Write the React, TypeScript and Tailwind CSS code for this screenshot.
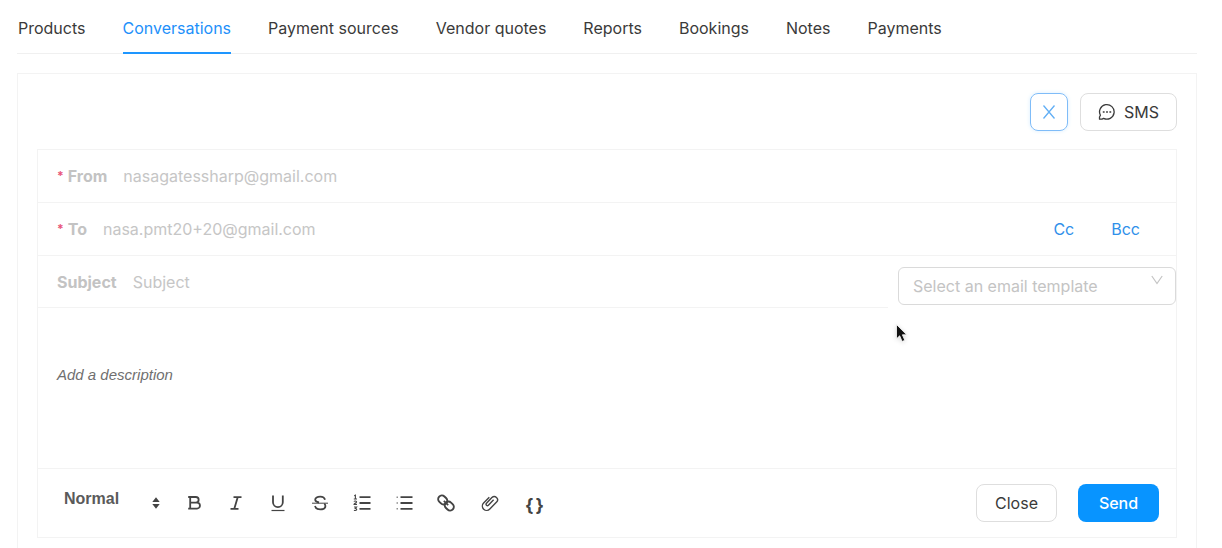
import type { ReactNode } from "react";

const tabs = [
  "Products",
  "Conversations",
  "Payment sources",
  "Vendor quotes",
  "Reports",
  "Bookings",
  "Notes",
  "Payments",
];

const Icon = ({ children, className = "size-[18px]" }: { children: ReactNode; className?: string }) => (
  <svg
    viewBox="0 0 18 18"
    className={className}
    fill="none"
    stroke="currentColor"
    strokeWidth="1.8"
    aria-hidden="true"
  >
    {children}
  </svg>
);

const tools: { label: string; icon: ReactNode }[] = [
  {
    label: "Bold",
    icon: (
      <Icon>
        <path d="M3.2 3h7.600a2.800 2.800 0 0 1 0 5.700H5M5 8.700h7a2.900 2.900 0 0 1 0 5.900H3.200M5.200 3v11.600" />
      </Icon>
    ),
  },
  {
    label: "Italic",
    icon: (
      <Icon>
        <path d="M6.500 3.200h8M3.500 14.800h8M10.700 3.200 7.300 14.800" />
      </Icon>
    ),
  },
  {
    label: "Underline",
    icon: (
      <Icon>
        <path d="M4 1.500v6.700a4.900 4.900 0 0 0 9.800 0V1.500" />
        <path d="M2.500 16.500h13" strokeWidth="1.200" />
      </Icon>
    ),
  },
  {
    label: "Strikethrough",
    icon: (
      <Icon>
        <path d="M14 5.800C13.500 3.600 11.500 2.600 9.200 2.600c-2.900 0-5 1.200-5 3.200C4.200 7.300 5.600 8 8 8.500M4 12c.6 2.400 2.600 3.400 5.200 3.400 3 0 5.200-1.200 5.200-3.400 0-1-.4-1.700-1.200-2.200" />
        <path d="M1 9.200h16" strokeWidth="1" />
      </Icon>
    ),
  },
  {
    label: "Ordered list",
    icon: (
      <Icon>
        <path d="M6.500 3.200H17.500M6.500 9H17.500M6.500 14.800H17.500" />
        <path
          d="M1.200 1.800l1.200-.6v3.600M.8 5h3.200M1 7.600c.4-.9 2.600-.8 2.600.3 0 .9-2.600 1.400-2.600 2.500h3M1 13h2.600l-1.300 1.500c2.200 0 1.800 2.600-1.400 1.800"
          strokeWidth="1.100"
        />
      </Icon>
    ),
  },
  {
    label: "Bullet list",
    icon: (
      <Icon>
        <path d="M5.500 3.200H17.500M5.500 9H17.500M5.500 14.800H17.500" />
        <path d="M1.500 3.200H3M1.500 9H3M1.500 14.800H3" strokeWidth="1.500" opacity="0.6" />
      </Icon>
    ),
  },
  {
    label: "Insert link",
    icon: (
      <Icon>
        <g transform="rotate(43 9 9)" strokeWidth="2">
          <rect x="-0.300" y="5.300" width="9.600" height="7.400" rx="3.700" />
          <rect x="8.700" y="5.300" width="9.600" height="7.400" rx="3.700" />
          <path d="M6 9h6" strokeWidth="1.700" />
        </g>
      </Icon>
    ),
  },
  {
    label: "Attach file",
    icon: (
      <Icon className="ml-0.5 size-[18px]">
        <path
          d="M12.600 5.800 7.400 11.200a1.300 1.300 0 0 1-1.900-1.900l5.400-5.700a3.200 3.200 0 0 1 4.700 4.500l-6.800 7a4.300 4.300 0 0 1-6.200-6l5.700-5.900"
          strokeWidth="1.400"
        />
      </Icon>
    ),
  },
];

function Field({
  id,
  label,
  value,
  children,
}: {
  id: string;
  label: string;
  value: string;
  children?: ReactNode;
}) {
  return (
    <div className="flex h-[53px] items-center border-b border-[#f3f3f3] pl-[19px] pr-9">
      <label htmlFor={id} className="flex gap-1 font-bold text-[#c3c3c3]">
        <span className="text-xs leading-6 text-[#e8557a]">*</span>
        {label}
      </label>
      <input
        id={id}
        type="email"
        defaultValue={value}
        className="ml-4 min-w-0 flex-1 bg-transparent text-[#c6c6c6] outline-none"
      />
      {children}
    </div>
  );
}

export default function App() {
  return (
    <div className="relative min-h-screen bg-white pl-[17px] pr-[25px] font-['Inter',sans-serif] text-base text-[#3a3a3a]">
      <nav className="flex gap-[37px] border-b border-[#f0f0f0] pl-px">
        {tabs.map((tab) => (
          <a
            key={tab}
            href={`#${tab.toLowerCase().replace(" ", "-")}`}
            aria-current={tab === "Conversations" ? "page" : undefined}
            className={
              tab === "Conversations"
                ? "-mb-px border-b-2 border-[#1e96ff] pt-4 pb-3 text-[#1e90fa]"
                : "pt-4 pb-3"
            }
          >
            {tab}
          </a>
        ))}
      </nav>

      <main className="mt-[19px] min-h-[475px] border border-b-0 border-[#f3f3f3] px-[19px] pt-[19px]">
        <div className="flex justify-end gap-3">
          <button
            type="button"
            aria-label="Close conversation"
            className="flex size-[38px] items-center justify-center rounded-lg border border-[#7fbcf8] text-[#62aff5] shadow-[0_0_4px_#d9eeff]"
          >
            <svg viewBox="0 0 14 16" className="h-4 w-3.5" fill="none" stroke="currentColor" strokeWidth="1.300">
              <path d="M1.500 1.500 12.500 14.500M12.500 1.500 1.500 14.500" />
            </svg>
          </button>
          <button
            type="button"
            className="flex h-[38px] items-center gap-2 rounded-lg border border-[#dedede] px-[17px]"
          >
            <svg viewBox="0 0 18 18" className="size-[18px]" fill="none" stroke="currentColor" strokeWidth="1.300">
              <path d="M1.500 16.200V14L2.400 12.300A7.300 7.300 0 1 1 5.600 15.400L4 16.200Z" strokeLinejoin="round" />
              <path d="M4.800 9h1.800M8.100 9h1.800M11.400 9h1.800" strokeWidth="1.500" />
            </svg>
            SMS
          </button>
        </div>

        <form className="mt-[18px] border border-[#f3f3f3]" onSubmit={(e) => e.preventDefault()}>
          <Field id="from" label="From" value="nasagatessharp@gmail.com" />
          <Field id="to" label="To" value="nasa.pmt20+20@gmail.com">
            <div className="flex gap-[37px] text-[#2f90ea]">
              <button type="button">Cc</button>
              <button type="button">Bcc</button>
            </div>
          </Field>

          <div className="flex gap-[10px]">
            <div className="flex h-[52px] flex-1 items-center border-b border-[#f3f3f3] pl-[19px]">
              <label htmlFor="subject" className="font-bold text-[#c3c3c3]">
                Subject
              </label>
              <input
                id="subject"
                placeholder="Subject"
                className="ml-4 min-w-0 flex-1 bg-transparent outline-none placeholder:text-[#c6c6c6]"
              />
            </div>
            <div className="relative mt-[11px] -mb-2 w-[278px]">
              <select
                aria-label="Email template"
                className="h-[38px] w-full appearance-none rounded-md border border-[#dadada] bg-white px-[14px] text-[#c4c4c4] outline-none"
              >
                <option>Select an email template</option>
              </select>
              <svg
                viewBox="0 0 12 10"
                className="pointer-events-none absolute top-2 right-[13px] h-2.5 w-3"
                fill="none"
                stroke="#c4c4c4"
                strokeWidth="1.200"
              >
                <path d="M.8 1 6 8.500 11.200 1" />
              </svg>
            </div>
          </div>

          <textarea
            aria-label="Description"
            placeholder="Add a description"
            className="block h-[161px] w-full resize-none border-b border-[#f3f3f3] px-[19px] pt-[58px] font-['Liberation_Sans',sans-serif] text-[15px] leading-[18px] outline-none placeholder:text-[#6f6f6f] placeholder:italic"
          />

          <div className="flex h-[68px] items-center justify-between pr-[17px] pl-[26px]">
            <div className="flex items-center text-[#444]">
              <div className="relative w-[102px] font-['Liberation_Sans',sans-serif] text-base font-bold text-[#5a5a5a]">
                <select
                  aria-label="Text style"
                  className="mb-2 block w-full appearance-none bg-transparent outline-none"
                >
                  <option>Normal</option>
                </select>
                <svg viewBox="0 0 8 12" className="pointer-events-none absolute top-2.5 right-1.5 h-3 w-2" fill="#444">
                  <path d="M.3 4.900 4 .3 7.700 4.900ZM.3 7.100 4 11.700 7.700 7.100Z" />
                </svg>
              </div>
              <div className="ml-[19px] flex items-center gap-6">
                {tools.map((tool) => (
                  <button key={tool.label} type="button" aria-label={tool.label}>
                    {tool.icon}
                  </button>
                ))}
                <button
                  type="button"
                  className="mt-1.5 ml-0.5 flex gap-0.5 text-lg leading-6 font-bold"
                  aria-label="Insert variable"
                >
                  <span>{"{"}</span>
                  <span>{"}"}</span>
                </button>
              </div>
            </div>
            <div className="flex gap-[21px]">
              <button type="button" className="h-[38px] w-[81px] rounded-lg border border-[#dedede]">
                Close
              </button>
              <button type="submit" className="h-[38px] w-[81px] rounded-lg bg-[#0894ff] font-medium text-white">
                Send
              </button>
            </div>
          </div>
        </form>
      </main>

      <svg
        viewBox="0 0 12 20"
        className="pointer-events-none absolute top-[323px] left-[895px] h-5 w-3 drop-shadow-sm"
        aria-hidden="true"
      >
        <path d="M1.500 1.500v14.300l3.200-3 2.400 5.700 2.700-1.200-2.400-5.500h4.300Z" fill="#111" stroke="#fff" strokeWidth="0.800" />
      </svg>
    </div>
  );
}
